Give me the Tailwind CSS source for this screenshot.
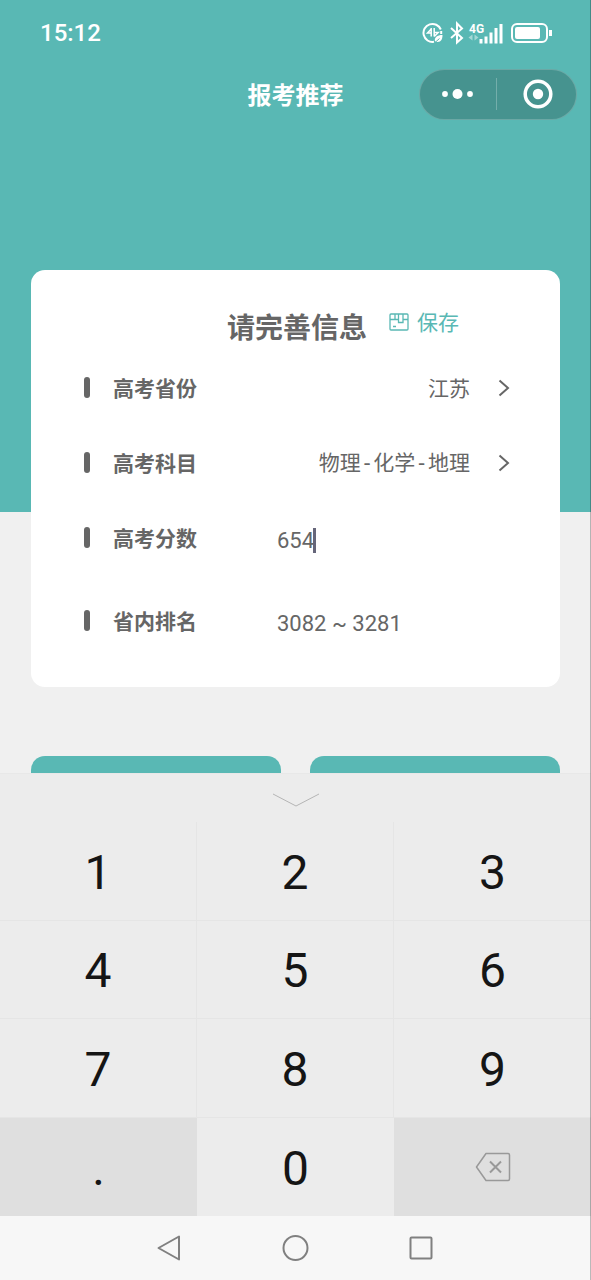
<!DOCTYPE html>
<html lang="zh-CN">
<head>
<meta charset="utf-8">
<meta name="viewport" content="width=device-width, initial-scale=1">
<title>报考推荐</title>
<script src="https://cdn.jsdelivr.net/npm/@tailwindcss/browser@4"></script>
</head>
<body class="relative flex h-screen flex-col overflow-hidden bg-[#f0f0f0] font-['Noto_Sans_CJK_SC',sans-serif] text-[#666]">
  <div class="min-h-0 flex-1 overflow-hidden">
    <header class="h-[512px] bg-[#59b8b4] text-white">
      <!-- Status bar -->
      <div class="flex h-[66px] items-center justify-between pl-10 pr-[39px] font-['Roboto',sans-serif]">
        <time class="text-2xl font-medium">15:12</time>
        <svg class="h-6 w-[130px]" viewBox="0 0 130 24" fill="none" stroke="#fff" aria-hidden="true">
          <path d="M18.800 8.500A9 9 0 1 0 12 20.800M19.200 10v3" stroke-width="2"/>
          <path d="M9.200 7v8.500M9.200 8l-3.700 4h3.700M12.200 7v8.500M12.200 15.500l4-4h-4" stroke-width="1.500"/>
          <path d="M13 20.500c-1-4 2-6.500 7.500-6.500 0 5-2 8-7.500 6.500z" fill="#fff" stroke="none"/>
          <path d="M13 21.500l4.500-4" stroke="#59b8b4"/>
          <path d="M29 7l11 10-5 4.500V2.500L40 7.500 29 17" stroke-width="2"/>
          <text x="47" y="12" font-size="12" font-weight="700" fill="#fff" stroke="none">4G</text>
          <path d="M50.500 13.500v6l-4-3zM52.500 13.500v6l4-3z" fill="#a5d8d6" stroke="none"/>
          <path d="M59 18v4.500M64 15.500v7M69 11.500v11M74 7v15.500M79 3v19.500" stroke-width="3"/>
          <rect x="90" y="3" width="35" height="18" rx="5" stroke-width="2"/>
          <rect x="93" y="6" width="25" height="12" rx="2" fill="#fff" stroke="none"/>
          <path d="M128.500 9v6" stroke-width="3"/>
        </svg>
      </div>
      <!-- Mini program title bar -->
      <div class="grid h-14 grid-cols-[1fr_auto_1fr] items-center pr-3.5">
        <span></span>
        <h1 class="pl-3.5 text-2xl font-bold">报考推荐</h1>
        <div class="flex h-[51px] w-[158px] items-center justify-self-end rounded-full border border-white/20 bg-[#46938f]">
          <button class="flex h-full flex-1 items-center justify-center" aria-label="更多">
            <svg class="h-3 w-8" viewBox="0 0 32 12" fill="#fff"><circle cx="3" cy="6" r="2.900"/><circle cx="15.500" cy="6" r="5"/><circle cx="28" cy="6" r="2.900"/></svg>
          </button>
          <span class="h-8 w-px bg-white/25"></span>
          <button class="flex h-full flex-1 items-center justify-center pl-1" aria-label="关闭">
            <svg class="size-8" viewBox="0 0 32 32"><circle cx="16" cy="16" r="12.800" fill="none" stroke="#fff" stroke-width="3.500"/><circle cx="16" cy="16" r="5.200" fill="#fff"/></svg>
          </button>
        </div>
      </div>
    </header>

    <main class="-mt-[242px] px-[31px]">
      <form class="rounded-[14px] bg-white pb-[29px] pl-[53px] pr-[50px] pt-8 text-[21px]">
        <div class="grid h-12 grid-cols-[1fr_auto_1fr] items-center">
          <span></span>
          <h2 class="text-[28px] font-bold">请完善信息</h2>
          <button type="button" class="flex items-center gap-2 pb-2 pl-[22px] text-[#59b8b4]">
            <svg class="h-[18px] w-5" viewBox="0 0 20 18" fill="none" stroke="currentColor" stroke-width="1.300"><rect x="1" y="1" width="18" height="16" rx="1"/><path d="M1 6.500h5M6 1v5.500h3.500M9.500 1v8.500h4.500V1M14 6.500h5M4 13.500h3"/></svg>
            保存
          </button>
        </div>

        <div class="flex h-[75px] items-center">
          <span class="flex w-[193px] items-center gap-[23px] font-bold"><i class="h-[21px] w-1.5 rounded-full bg-[#666]"></i>高考省份</span>
          <button type="button" class="flex flex-1 items-center justify-end gap-7" aria-label="高考省份 江苏">
            江苏
            <svg class="h-5 w-3" viewBox="0 0 12 20" fill="none" stroke="currentColor" stroke-width="2"><path d="M1.500 2.500L10 10l-8.500 7.500"/></svg>
          </button>
        </div>
        <div class="flex h-[75px] items-center">
          <span class="flex w-[193px] items-center gap-[23px] font-bold"><i class="h-[21px] w-1.5 rounded-full bg-[#666]"></i>高考科目</span>
          <button type="button" class="flex flex-1 items-center justify-end gap-7" aria-label="高考科目 物理-化学-地理">
            <span>物理<span class="font-['DejaVu_Sans_Mono',monospace]">-</span>化学<span class="font-['DejaVu_Sans_Mono',monospace]">-</span>地理</span>
            <svg class="h-5 w-3" viewBox="0 0 12 20" fill="none" stroke="currentColor" stroke-width="2"><path d="M1.500 2.500L10 10l-8.500 7.500"/></svg>
          </button>
        </div>
        <div class="flex h-[75px] items-center">
          <label for="score" class="flex w-[193px] items-center gap-[23px] font-bold"><i class="h-[21px] w-1.5 rounded-full bg-[#666]"></i>高考分数</label>
          <div class="flex items-center pt-1.5 font-['Roboto',sans-serif] text-[22px]">
            <input id="score" type="text" inputmode="numeric" value="654" class="field-sizing-content caret-transparent outline-none">
            <span class="-ml-px h-[25px] w-[3px] bg-[#66667a]"></span>
          </div>
        </div>
        <div class="mt-2 flex h-[75px] items-center">
          <span class="flex w-[193px] items-center gap-[23px] font-bold"><i class="h-[21px] w-1.5 rounded-full bg-[#666]"></i>省内排名</span>
          <output for="score" class="pt-1.5 font-['Roboto',sans-serif] text-[22px]">3082 ~ 3281</output>
        </div>
      </form>

      <div class="mt-[69px] grid grid-cols-2 gap-[29px]">
        <button class="h-20 rounded-[14px] bg-[#59b8b4]" aria-label="推荐"></button>
        <button class="h-20 rounded-[14px] bg-[#59b8b4]" aria-label="查询"></button>
      </div>
    </main>
  </div>

  <!-- Numeric keyboard -->
  <section class="shrink-0 bg-[#ececec] font-['Roboto',sans-serif] text-[#151515]">
    <button class="flex h-[49px] w-full items-center justify-center border-t border-[#e8e8e8] pt-1" aria-label="收起键盘">
      <svg class="h-4 w-12" viewBox="0 0 48 16" fill="none" stroke="#b5b5b5"><path d="M1 2l23 12L47 2"/></svg>
    </button>
    <div class="grid h-[394px] grid-cols-3 grid-rows-4 text-5xl">
      <button class="border-b border-r border-[#e5e5e5] pt-1">1</button>
      <button class="border-b border-r border-[#e5e5e5] pt-1">2</button>
      <button class="border-b border-[#e5e5e5] pt-1">3</button>
      <button class="border-b border-r border-[#e5e5e5] pt-1">4</button>
      <button class="border-b border-r border-[#e5e5e5] pt-1">5</button>
      <button class="border-b border-[#e5e5e5] pt-1">6</button>
      <button class="border-b border-r border-[#e5e5e5] pt-1">7</button>
      <button class="border-b border-r border-[#e5e5e5] pt-1">8</button>
      <button class="border-b border-[#e5e5e5] pt-1">9</button>
      <button class="bg-[#dfdfdf] pt-1">.</button>
      <button class="pt-1">0</button>
      <button class="flex items-center justify-center bg-[#dfdfdf]" aria-label="删除">
        <svg class="h-8 w-9" viewBox="0 0 36 32" fill="none" stroke="#999" stroke-width="1.500" stroke-linejoin="round"><path d="M11 2.500h22q1.500 0 1.500 1.500v24q0 1.500-1.500 1.500H11L1.500 16z"/><path d="M15 10.500l11 11M26 10.500l-11 11" stroke-width="2"/></svg>
      </button>
    </div>
  </section>

  <nav class="flex h-16 shrink-0 items-center justify-center gap-[98px] bg-[#f7f7f7] text-[#808080]">
    <button aria-label="返回"><svg class="size-7" viewBox="0 0 28 28" fill="none" stroke="currentColor" stroke-width="2" stroke-linejoin="round"><path d="M23 2.500v23L2.500 14z"/></svg></button>
    <button aria-label="主页"><svg class="size-7" viewBox="0 0 28 28" fill="none" stroke="currentColor" stroke-width="2"><circle cx="13.500" cy="14" r="12"/></svg></button>
    <button aria-label="最近任务"><svg class="size-7" viewBox="0 0 28 28" fill="none" stroke="currentColor" stroke-width="2"><rect x="2.500" y="3.500" width="21" height="21" rx="1"/></svg></button>
  </nav>
  <div class="pointer-events-none absolute inset-y-0 right-0 w-px bg-black/25"></div>
</body>
</html>
